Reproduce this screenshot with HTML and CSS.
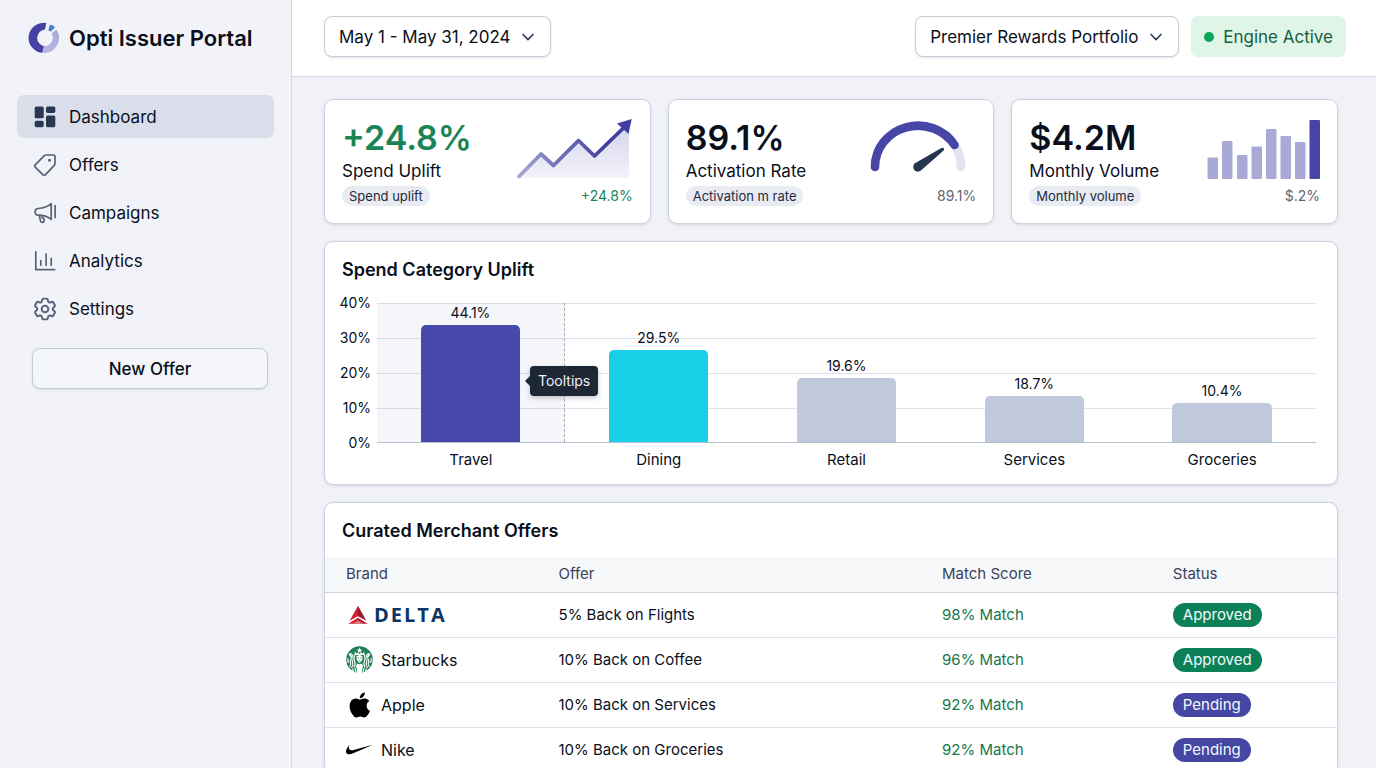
FILE: index.html
```html
<!DOCTYPE html>
<html lang="en">
<head>
<meta charset="utf-8">
<meta name="viewport" content="width=device-width, initial-scale=1">
<title>Opti Issuer Portal</title>
<link rel="stylesheet" href="styles.css">
</head>
<body>
<div class="app">
  <aside class="sidebar">
    <div class="brand">
      <svg class="brand-logo" viewBox="0 0 32 32" aria-hidden="true">
        <defs>
          <linearGradient id="ringLight" x1="0" y1="0" x2="0" y2="1">
            <stop offset="0" stop-color="#a3a9da"/><stop offset="1" stop-color="#bab5e3"/>
          </linearGradient>
        </defs>
        <path d="M18.3 1.1 A15 15 0 1 0 14.4 30.8 L16 24.2 A8.5 8.500 0 0 1 17 7.400 Z" fill="#4542a3"/>
        <path d="M28.4 7.600 A15 15 0 0 1 14.4 30.900 L16 24.300 A8.500 8.500 0 0 0 23.600 11.400 Z" fill="url(#ringLight)"/>
        <path d="M21.900 2.400 Q25 3 27.200 5.200 L22.900 9.400 L20.300 8.600 Z" fill="#4a7fc9"/>
      </svg>
      <span class="brand-name">Opti Issuer Portal</span>
    </div>
    <nav class="nav" aria-label="Main">
      <a class="nav-item is-active" href="#dashboard" aria-current="page">
        <svg class="nav-icon" viewBox="0 0 24 24" aria-hidden="true">
          <g fill="#283752">
            <rect x="1.7" y="1.5" width="9" height="11.8" rx="1.6"/>
            <rect x="13" y="1.5" width="9.3" height="6.4" rx="1.6"/>
            <rect x="1.7" y="15.8" width="9" height="6.4" rx="1.6"/>
            <rect x="13" y="10.4" width="9.3" height="11.8" rx="1.6"/>
          </g>
        </svg>
        Dashboard
      </a>
      <a class="nav-item" href="#offers">
        <svg class="nav-icon" viewBox="0 0 24 24" aria-hidden="true">
          <g class="stroke">
            <path d="M11.3 2.6 Q11.9 2 12.8 2 H20.4 Q22 2 22 3.6 V10.6 Q22 11.5 21.4 12.2 L12.3 21.9 Q11.2 23 10.1 21.9 L2.2 14.1 Q1.1 13 2.2 11.9 Z"/>
            <circle cx="16.5" cy="7.2" r=".7"/>
          </g>
        </svg>
        Offers
      </a>
      <a class="nav-item" href="#campaigns">
        <svg class="nav-icon" viewBox="0 0 24 24" aria-hidden="true">
          <g class="stroke">
            <path d="M5 7.5 C10 7.200 14.5 5.800 18.2 2.6 V18.400 C14.5 15.4 10 14.2 5 14.2 C1.2 14.2 1.2 7.5 5 7.5 Z"/>
            <path d="M6.3 14.4 L7.5 19.7 Q8 21.5 9.6 21.3 Q11.5 21 11.1 19.1 L10.7 17.3 L9.3 16.9 L8.9 14.6"/>
            <path d="M22.1 4.6 V16.6"/>
          </g>
        </svg>
        Campaigns
      </a>
      <a class="nav-item" href="#analytics">
        <svg class="nav-icon" viewBox="0 0 24 24" aria-hidden="true">
          <path class="stroke" d="M2.8 2.8 V20.7 H21.6 M7.8 11.5 V16.2 M13.1 5.2 V16.2 M18.2 9.3 V16.2"/>
        </svg>
        Analytics
      </a>
      <a class="nav-item" href="#settings">
        <svg class="nav-icon" viewBox="1.6 1.6 20.8 20.8" aria-hidden="true">
          <g class="stroke">
            <path d="M9.594 3.94c.09-.542.56-.94 1.11-.94h2.593c.55 0 1.02.398 1.11.94l.213 1.281c.063.374.313.686.645.87.074.04.147.083.22.127.325.196.72.257 1.075.124l1.217-.456a1.125 1.125 0 0 1 1.37.49l1.296 2.247a1.125 1.125 0 0 1-.26 1.431l-1.003.827c-.293.241-.438.613-.43.992a7.723 7.723 0 0 1 0 .255c-.008.378.137.75.43.991l1.004.827c.424.35.534.955.26 1.43l-1.298 2.247a1.125 1.125 0 0 1-1.369.491l-1.217-.456c-.355-.133-.75-.072-1.076.124a6.47 6.47 0 0 1-.22.128c-.331.183-.581.495-.644.869l-.213 1.281c-.09.543-.56.94-1.11.94h-2.594c-.55 0-1.019-.398-1.11-.94l-.213-1.281c-.062-.374-.312-.686-.644-.87a6.52 6.52 0 0 1-.22-.127c-.325-.196-.72-.257-1.076-.124l-1.217.456a1.125 1.125 0 0 1-1.369-.49l-1.297-2.247a1.125 1.125 0 0 1 .26-1.431l1.004-.827c.292-.24.437-.613.43-.991a6.932 6.932 0 0 1 0-.255c.007-.38-.138-.751-.43-.992l-1.004-.827a1.125 1.125 0 0 1-.26-1.43l1.297-2.247a1.125 1.125 0 0 1 1.37-.491l1.216.456c.356.133.751.072 1.076-.124.072-.044.146-.086.22-.128.332-.183.582-.495.644-.869l.214-1.28Z"/>
            <circle cx="12" cy="12" r="2.9"/>
          </g>
        </svg>
        Settings
      </a>
    </nav>
    <button class="new-offer" type="button">New Offer</button>
  </aside>

  <div class="page">
    <header class="topbar">
      <label class="picker">
        <select class="picker-select" aria-label="Date range">
          <option>May 1 - May 31, 2024</option>
        </select>
        <svg class="picker-chevron" viewBox="0 0 14 14" aria-hidden="true"><path d="M2 4.5 L7 9.7 L12 4.5"/></svg>
      </label>
      <div class="topbar-end">
        <label class="picker">
          <select class="picker-select" aria-label="Portfolio">
            <option>Premier Rewards Portfolio</option>
          </select>
          <svg class="picker-chevron" viewBox="0 0 14 14" aria-hidden="true"><path d="M2 4.5 L7 9.7 L12 4.5"/></svg>
        </label>
        <div class="engine" role="status"><span class="engine-dot"></span>Engine Active</div>
      </div>
    </header>

    <main class="content">
      <section class="kpis" aria-label="Key metrics">
        <article class="card kpi">
          <div class="kpi-text">
            <div class="kpi-value is-positive">+24.8%</div>
            <div class="kpi-label">Spend Uplift</div>
            <div class="chip">Spend uplift</div>
          </div>
          <div class="kpi-visual">
            <svg class="kpi-chart" width="117" height="62" viewBox="0 0 117 62" aria-hidden="true">
              <defs>
                <linearGradient id="trendFill" x1="0" y1="0" x2="0" y2="1">
                  <stop offset="0" stop-color="#d3d3ec"/><stop offset="1" stop-color="#f3f3fa"/>
                </linearGradient>
                <linearGradient id="trendLine" gradientUnits="userSpaceOnUse" x1="0" y1="0" x2="90" y2="0">
                  <stop offset="0" stop-color="#aaaad6"/><stop offset=".5" stop-color="#6e6eb6"/><stop offset="1" stop-color="#433fa0"/>
                </linearGradient>
              </defs>
              <path d="M3 60 L25 36 L37 48 L62 23 L78 38 L113 6 V60 Z" fill="url(#trendFill)"/>
              <path d="M3 58.5 L25 36 L37.5 47.5 L62.5 22.5 L78.5 38 L109 8.5" fill="none" stroke="url(#trendLine)" stroke-width="3.8" stroke-linecap="round" stroke-linejoin="round"/>
              <path d="M115.7 1 L101 5.5 L112.5 16 Z" fill="#433fa0"/>
            </svg>
            <div class="kpi-note is-positive">+24.8%</div>
          </div>
        </article>

        <article class="card kpi">
          <div class="kpi-text">
            <div class="kpi-value">89.1%</div>
            <div class="kpi-label">Activation Rate</div>
            <div class="chip">Activation m rate</div>
          </div>
          <div class="kpi-visual">
            <svg class="kpi-chart" width="107" height="62" viewBox="-1 0 107 62" aria-hidden="true">
              <g fill="none" stroke-width="8.6" stroke-linecap="round">
                <path d="M85 27.5 A43 41 0 0 1 91 49" stroke="#e2e4ef"/>
                <path d="M5 49 A43 41 0 0 1 84.5 27" stroke="#4745a6"/>
              </g>
              <path d="M45 45.3 L71 30.2 Q75.2 28.8 73.6 32.4 L51.2 52.3 Q47.8 55 44.4 52.2 Q41.8 48.2 45 45.3 Z" fill="#25354e"/>
            </svg>
            <div class="kpi-note">89.1%</div>
          </div>
        </article>

        <article class="card kpi">
          <div class="kpi-text">
            <div class="kpi-value">$4.2M</div>
            <div class="kpi-label">Monthly Volume</div>
            <div class="chip">Monthly volume</div>
          </div>
          <div class="kpi-visual">
            <svg class="kpi-chart" width="113" height="62" viewBox="0 0 113 62" aria-hidden="true">
              <g fill="#a9a9d8">
                <rect x=".5" y="39.5" width="10.5" height="21.5" rx="1"/>
                <rect x="15" y="23" width="10.5" height="38" rx="1"/>
                <rect x="30" y="37" width="10.5" height="24" rx="1"/>
                <rect x="44.5" y="28.5" width="10.5" height="32.5" rx="1"/>
                <rect x="59" y="11" width="10.5" height="50" rx="1"/>
                <rect x="73.5" y="18" width="10.5" height="43" rx="1"/>
                <rect x="88" y="24" width="10.5" height="37" rx="1"/>
              </g>
              <rect x="102.5" y="2" width="10.5" height="59" rx="1" fill="#4745a6"/>
            </svg>
            <div class="kpi-note">$.2%</div>
          </div>
        </article>
      </section>

      <section class="card uplift">
        <h2 class="card-title">Spend Category Uplift</h2>
        <div class="chart">
          <div class="axis" aria-hidden="true">
            <span>40%</span><span>30%</span><span>20%</span><span>10%</span><span>0%</span>
          </div>
          <div class="plot">
            <div class="column is-hovered">
              <span class="bar-value">44.1%</span>
              <div class="bar is-indigo" style="height:84%"></div>
              <div class="tooltip" role="tooltip">Tooltips</div>
            </div>
            <div class="column">
              <span class="bar-value">29.5%</span>
              <div class="bar is-cyan" style="height:66%"></div>
            </div>
            <div class="column">
              <span class="bar-value">19.6%</span>
              <div class="bar" style="height:46%"></div>
            </div>
            <div class="column">
              <span class="bar-value">18.7%</span>
              <div class="bar" style="height:33%"></div>
            </div>
            <div class="column">
              <span class="bar-value">10.4%</span>
              <div class="bar" style="height:28%"></div>
            </div>
          </div>
          <div class="categories">
            <span>Travel</span><span>Dining</span><span>Retail</span><span>Services</span><span>Groceries</span>
          </div>
        </div>
      </section>

      <section class="card offers">
        <h2 class="card-title offers-title">Curated Merchant Offers</h2>
        <table class="table">
          <thead>
            <tr>
              <th class="col-brand" scope="col">Brand</th>
              <th class="col-offer" scope="col">Offer</th>
              <th class="col-score" scope="col">Match Score</th>
              <th scope="col">Status</th>
            </tr>
          </thead>
          <tbody>
            <tr>
              <td>
                <div class="merchant is-delta">
                  <svg width="24" height="20" viewBox="0 0 24 20" aria-hidden="true">
                    <path d="M12 .8 L12 11.3 L3.6 15.8 Z" fill="#d3202f"/>
                    <path d="M12 .8 L12 11.3 L20.4 15.8 Z" fill="#9c1a33"/>
                    <path d="M12 12.8 L21.8 18.8 H12 Z" fill="#b3202f"/>
                    <path d="M12 12.8 L2.2 18.8 H12 Z" fill="#d3202f"/>
                    <path d="M12 15.6 L17 18.8 H7 Z" fill="#e57e84"/>
                  </svg>
                  <span class="delta-name">DELTA</span>
                </div>
              </td>
              <td>5% Back on Flights</td>
              <td class="score">98% Match</td>
              <td><span class="badge is-approved">Approved</span></td>
            </tr>
            <tr>
              <td>
                <div class="merchant">
                  <svg width="27" height="27" viewBox="0 0 54 54" aria-hidden="true">
                    <circle cx="27" cy="27" r="26.5" fill="#1f7f56"/>
                    <g fill="#fff">
                      <path d="M27 3 L28.6 7 L32.8 7.2 L29.5 9.8 L30.6 14 L27 11.6 L23.4 14 L24.5 9.8 L21.2 7.2 L25.4 7 Z"/>
                      <path d="M18 10 L20 15 L24 13.5 L27 16 L30 13.5 L34 15 L36 10 L37.5 18 H16.5 Z"/>
                      <path d="M21 21 Q27 15 33 21 Q34 30 27 34 Q20 30 21 21 Z"/>
                      <path d="M22 35 Q27 38 32 35 L34 41 Q31 46 32 54 H22 Q23 46 20 41 Z"/>
                      <path d="M5 17 Q8 12 12 15 Q10 19 13 23 L9 24 Q9 20 5 17 Z M49 17 Q46 12 42 15 Q44 19 41 23 L45 24 Q45 20 49 17 Z"/>
                    </g>
                    <g fill="none" stroke="#fff" stroke-width="2.2">
                      <path d="M18 18 Q14 25 17 30 Q20 36 16 43 M14 17 Q10 25 13 31 Q15 37 11 44 M9 26 Q8 32 9.5 35 Q10.5 39 7 42 M4 24 Q3 29 5 34"/>
                      <path d="M36 18 Q40 25 37 30 Q34 36 38 43 M40 17 Q44 25 41 31 Q39 37 43 44 M45 26 Q46 32 44.5 35 Q43.5 39 47 42 M50 24 Q51 29 49 34"/>
                      <path d="M18 44 L20 52 M36 44 L34 52 M13 45 L15 51 M41 45 L39 51"/>
                    </g>
                    <g fill="#1f7f56">
                      <rect x="23" y="23" width="3" height="1.5"/><rect x="28.5" y="23" width="3" height="1.5"/>
                      <rect x="25" y="29" width="4" height="1.5"/>
                    </g>
                  </svg>
                  Starbucks
                </div>
              </td>
              <td>10% Back on Coffee</td>
              <td class="score">96% Match</td>
              <td><span class="badge is-approved">Approved</span></td>
            </tr>
            <tr>
              <td>
                <div class="merchant">
                  <svg width="27" height="26" viewBox="-.8 -.5 25 25" aria-hidden="true">
                    <path d="M12.152 6.896c-.948 0-2.415-1.078-3.96-1.04-2.04.027-3.91 1.183-4.961 3.014-2.117 3.675-.546 9.103 1.519 12.09 1.013 1.454 2.208 3.09 3.792 3.039 1.52-.065 2.09-.987 3.935-.987 1.831 0 2.35.987 3.96.948 1.637-.026 2.676-1.48 3.676-2.948 1.156-1.688 1.636-3.325 1.662-3.415-.039-.013-3.182-1.221-3.22-4.857-.026-3.04 2.48-4.494 2.597-4.559-1.429-2.09-3.623-2.324-4.39-2.376-2-.156-3.675 1.09-4.61 1.09zM15.53 3.83c.843-1.012 1.4-2.427 1.245-3.83-1.207.052-2.662.805-3.532 1.818-.78.896-1.454 2.338-1.273 3.714 1.338.104 2.715-.688 3.559-1.701"/>
                  </svg>
                  Apple
                </div>
              </td>
              <td>10% Back on Services</td>
              <td class="score">92% Match</td>
              <td><span class="badge is-pending">Pending</span></td>
            </tr>
            <tr>
              <td>
                <div class="merchant">
                  <svg width="27" height="27" viewBox="0 0 24 24" aria-hidden="true">
                    <path d="M24 7.8L6.442 15.276c-1.456.616-2.679.925-3.668.925-1.12 0-1.933-.392-2.437-1.177-.317-.504-.41-1.143-.28-1.918.13-.775.476-1.6 1.036-2.478.467-.71 1.232-1.643 2.297-2.8a6.122 6.122 0 0 0-.784 1.848c-.28 1.195-.028 2.072.756 2.632.373.261.886.392 1.54.392.522 0 1.11-.084 1.764-.252L24 7.8z"/>
                  </svg>
                  Nike
                </div>
              </td>
              <td>10% Back on Groceries</td>
              <td class="score">92% Match</td>
              <td><span class="badge is-pending">Pending</span></td>
            </tr>
          </tbody>
        </table>
      </section>
    </main>
  </div>
</div>
</body>
</html>
```

FILE: styles.css
```css
:root {
  --ink: #090f1c;
  --muted: #5d6678;
  --line: #ccd4df;
  --grid: #dde2ea;
  --canvas: #f0f2f7;
  --indigo: #4745a6;
  --green: #1b8456;
}

* {
  box-sizing: border-box;
}

body {
  margin: 0;
  background: var(--canvas);
  color: var(--ink);
  font-family: Inter, "Liberation Sans", sans-serif;
  font-size: 16px;
  line-height: 20px;
}

.app {
  display: flex;
  height: 100vh;
}

/* Sidebar */
.sidebar {
  flex: 0 0 292px;
  padding: 20px 17px;
  border-right: 1px solid #d3dae4;
  background: #f1f3f8;
}

.brand {
  display: flex;
  align-items: center;
  gap: 9px;
  padding-left: 11px;
  height: 36px;
}

.brand-logo {
  width: 32px;
  height: 32px;
}

.brand-name {
  font-size: 22px;
  font-weight: 600;
}

.nav {
  display: flex;
  flex-direction: column;
  gap: 5px;
  margin-top: 39px;
}

.nav-item {
  display: flex;
  align-items: center;
  gap: 12px;
  height: 43px;
  padding: 0 16px;
  border-radius: 7px;
  color: inherit;
  font-size: 17px;
  text-decoration: none;
}

.nav-item.is-active {
  background: #d9deea;
}

.nav-icon {
  width: 24px;
  height: 24px;
}

.stroke {
  fill: none;
  stroke: #57637a;
  stroke-width: 1.7;
  stroke-linecap: round;
  stroke-linejoin: round;
}

.new-offer {
  display: block;
  width: 236px;
  height: 41px;
  margin: 18px 0 0 15px;
  border: 1px solid #c3cbd7;
  border-radius: 8px;
  background: #f4f6fa;
  box-shadow: 0 1px 2px rgb(30 45 80 / 12%);
  color: inherit;
  font: inherit;
  font-size: 17px;
  font-weight: 500;
}

/* Top bar */
.page {
  display: flex;
  flex: 1;
  flex-direction: column;
  min-width: 0;
}

.topbar {
  display: flex;
  flex: none;
  align-items: center;
  justify-content: space-between;
  padding: 16px 30px 19px 32px;
  border-bottom: 1px solid #d3dae4;
  background: #fff;
}

.topbar-end {
  display: flex;
  gap: 12px;
}

.picker {
  display: grid;
  align-items: center;
}

.picker-select,
.picker-chevron {
  grid-area: 1 / 1;
}

.picker-select {
  height: 41px;
  padding: 0 39px 0 14px;
  border: 1px solid #c5cdd9;
  border-radius: 8px;
  appearance: none;
  background: #fff;
  box-shadow: 0 1px 2px rgb(30 45 80 / 12%);
  color: inherit;
  font: inherit;
  font-size: 17px;
}

.picker-chevron {
  justify-self: end;
  width: 14px;
  height: 14px;
  margin-right: 16px;
  fill: none;
  stroke: #34435c;
  stroke-width: 1.7;
  stroke-linecap: round;
  stroke-linejoin: round;
  pointer-events: none;
}

.engine {
  display: flex;
  align-items: center;
  gap: 9px;
  height: 41px;
  padding: 0 13px;
  border-radius: 7px;
  background: #dff5e8;
  color: #17603e;
  font-size: 17px;
}

.engine-dot {
  width: 10px;
  height: 10px;
  border-radius: 50%;
  background: #0ca25c;
}

/* Content */
.content {
  flex: 1;
  min-height: 0;
  padding: 22px 38px 24px 32px;
  overflow-y: auto;
  scrollbar-width: none;
}

.card {
  border: 1px solid var(--line);
  border-radius: 9px;
  background: #fff;
  box-shadow: 0 1px 3px rgb(30 45 80 / 14%);
}

.card-title {
  margin: 0;
  font-size: 18px;
  font-weight: 600;
  line-height: 24px;
}

/* Metric cards */
.kpis {
  display: grid;
  grid-template-columns: repeat(3, 1fr);
  gap: 17px;
}

.kpi {
  display: flex;
  justify-content: space-between;
  padding: 18px 17px 17px;
}

.kpi-value {
  font-size: 34px;
  font-weight: 600;
  line-height: 40px;
}

.kpi-label {
  font-size: 17px;
  line-height: 26px;
}

.chip {
  width: fit-content;
  margin-top: 2px;
  padding: 0 7px;
  border-radius: 10px;
  background: #e8ebf2;
  color: #1f2a3d;
  font-size: 13px;
}

.kpi-visual {
  display: flex;
  flex-direction: column;
  align-items: flex-end;
  justify-content: space-between;
}

.kpi-chart {
  display: block;
}

.kpi-note {
  color: var(--muted);
  font-size: 14px;
}

.is-positive {
  color: var(--green);
}

/* Category chart */
.uplift {
  margin-top: 17px;
  padding: 16px 21px 14px 17px;
}

.chart {
  display: grid;
  grid-template-columns: 29px 1fr;
  column-gap: 6px;
  margin-top: 21px;
  font-size: 15px;
}

.axis {
  display: flex;
  flex-direction: column;
  align-items: flex-end;
  justify-content: space-between;
  margin: -10px 0;
  font-size: 14px;
}

.plot {
  display: grid;
  grid-template-columns: repeat(5, 1fr);
  height: 140px;
  border-bottom: 1px solid #b6bfcd;
  background: repeating-linear-gradient(var(--grid) 0 1px, transparent 1px 35px);
}

.column {
  position: relative;
  display: flex;
  flex-direction: column;
  align-items: center;
  justify-content: flex-end;
}

.column.is-hovered {
  border-right: 1px dashed #a3abba;
  background: rgb(70 70 160 / 5%);
}

.bar {
  flex: none;
  width: 53%;
  border-radius: 5px 5px 0 0;
  background: #c0c8dc;
}

.bar.is-indigo {
  background: #474aab;
}

.bar.is-cyan {
  background: #17cfe7;
}

.bar-value {
  margin-bottom: 2px;
  font-size: 14px;
}

.tooltip {
  position: absolute;
  top: 63px;
  left: 153px;
  z-index: 1;
  padding: 5px 8px;
  border-radius: 4px;
  background: #1d2736;
  box-shadow: 0 2px 5px rgb(20 30 50 / 25%);
  color: #eef1f6;
  font-size: 14px;
}

.tooltip::before {
  position: absolute;
  top: 10px;
  left: -5px;
  border: 5px solid transparent;
  border-right-color: #1d2736;
  border-left: 0;
  content: "";
}

.categories {
  display: grid;
  grid-column: 2;
  grid-template-columns: repeat(5, 1fr);
  margin-top: 7px;
  text-align: center;
}

/* Offers table */
.offers {
  margin-top: 17px;
  overflow: hidden;
}

.offers-title {
  padding: 16px 17px 14px;
}

.table {
  width: 100%;
  border-collapse: collapse;
  table-layout: fixed;
  font-size: 15px;
}

.table th {
  height: 35px;
  padding: 0 0 0 21px;
  border-bottom: 1px solid var(--line);
  background: #f7f8fa;
  color: #38435a;
  font-weight: 400;
  text-align: left;
}

.table td {
  height: 45px;
  padding: 0 0 0 21px;
  border-bottom: 1px solid var(--grid);
}

.col-brand {
  width: 21%;
}

.col-offer {
  width: 37.9%;
}

.col-score {
  width: 22.8%;
}

.table .score {
  color: #15764a;
}

.merchant {
  display: flex;
  align-items: center;
  gap: 8px;
  font-size: 16px;
}

.merchant.is-delta {
  gap: 4px;
}

.delta-name {
  color: #0f3564;
  font-family: "Open Sans", sans-serif;
  font-size: 20px;
  font-weight: 700;
  letter-spacing: 2px;
}

.badge {
  display: inline-block;
  padding: 2px 10px;
  border-radius: 12px;
  color: #f4f8fb;
  font-size: 15px;
}

.badge.is-approved {
  background: #0c8158;
}

.badge.is-pending {
  background: #4547a2;
}
```
